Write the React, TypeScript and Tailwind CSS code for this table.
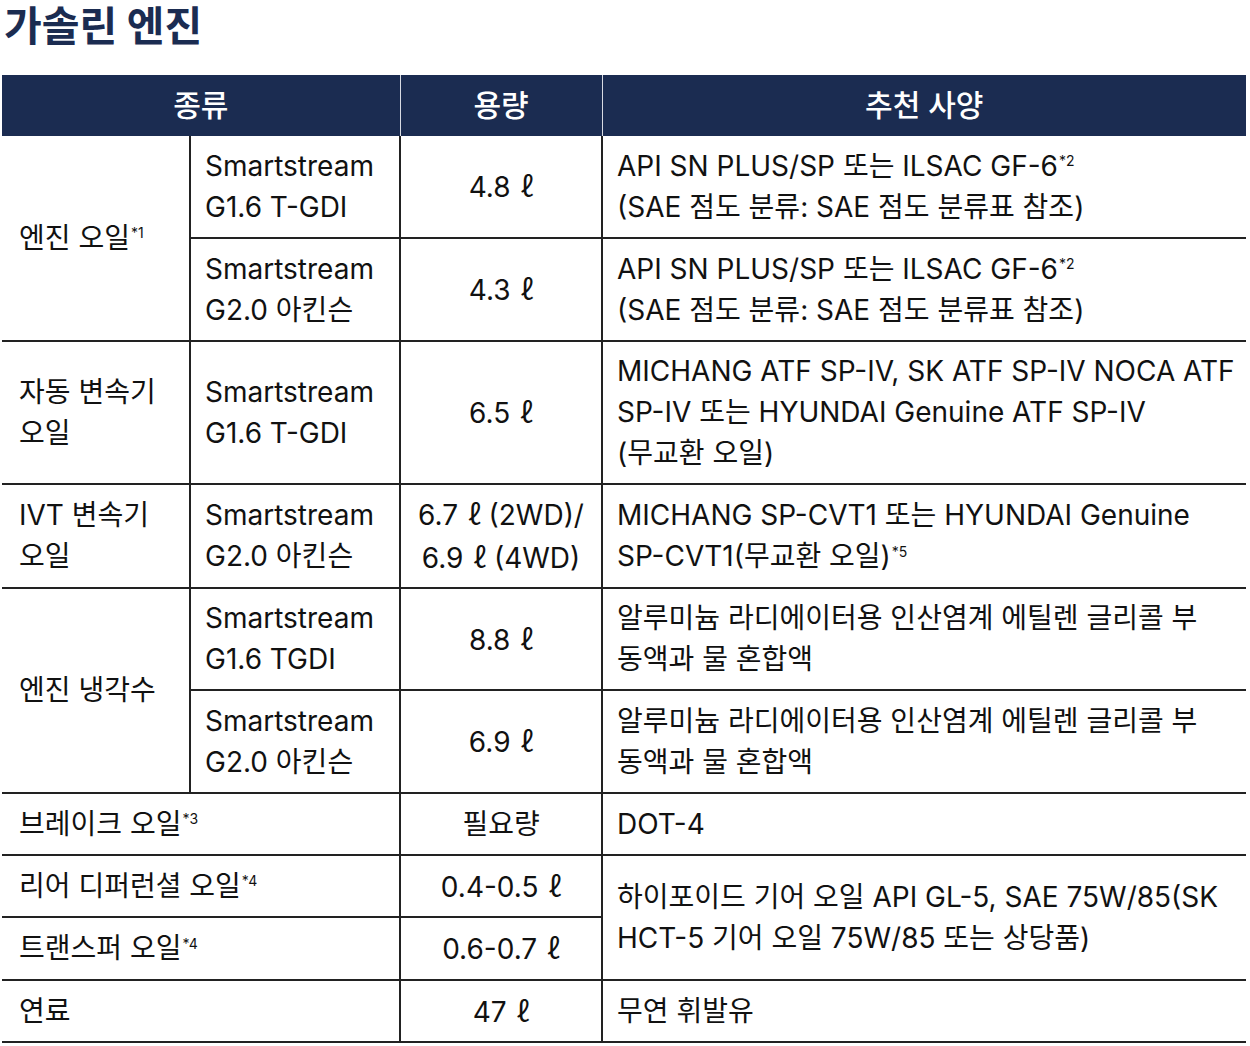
import React from "react";

const Sup = ({ children }: { children: React.ReactNode }) => (
  <sup className="text-[14px] align-super relative top-[1px] ml-[1px]">{children}</sup>
);

const L = () => <span className="font-['Noto_Sans_CJK_KR',sans-serif] ml-[2px]">ℓ</span>;

const tdBase = "border-b-2 border-[#222] text-[#111] align-middle";
const c1 = `${tdBase} border-r-2 pl-[17px] pr-1 text-left whitespace-nowrap`;
const c2 = `${tdBase} border-r-2 pl-[14px] pr-1 text-left whitespace-nowrap`;
const c3 = `${tdBase} border-r-2 text-center whitespace-nowrap px-0`;
const c4 = `${tdBase} pl-[14px] pr-0 text-left whitespace-nowrap`;

export default function App() {
  return (
    <div className="bg-white w-[1250px] h-[1046px] font-[Inter,'Noto_Sans_CJK_KR',sans-serif] text-[28px] leading-[41px]">
      <h1 className="pl-[4px] pt-[2px] h-[75px] text-[41px] leading-[48px] font-bold text-[#1b2c51]">
        가솔린 엔진
      </h1>
      <table className="ml-[2px] w-[1244px] table-fixed border-collapse">
        <colgroup>
          <col className="w-[188px]" />
          <col className="w-[210px]" />
          <col className="w-[202px]" />
          <col className="w-[644px]" />
        </colgroup>
        <thead>
          <tr className="h-[61px] bg-[#1b2c51] text-white">
            <th colSpan={2} className="font-medium text-[30px] border-r border-[#d8dbe2]">종류</th>
            <th className="font-medium text-[30px] border-r border-[#d8dbe2]">용량</th>
            <th className="font-medium text-[30px]">추천 사양</th>
          </tr>
        </thead>
        <tbody>
          <tr className="h-[102px]">
            <td rowSpan={2} className={c1}>
              엔진 오일<Sup>*1</Sup>
            </td>
            <td className={c2}>
              Smartstream
              <br />
              G1.6 T-GDI
            </td>
            <td className={c3}>
              4.8 <L />
            </td>
            <td className={c4}>
              API SN PLUS/SP 또는 ILSAC GF-6<Sup>*2</Sup>
              <br />
              (SAE 점도 분류: SAE 점도 분류표 참조)
            </td>
          </tr>
          <tr className="h-[103px]">
            <td className={c2}>
              Smartstream
              <br />
              G2.0 아킨슨
            </td>
            <td className={c3}>
              4.3 <L />
            </td>
            <td className={c4}>
              API SN PLUS/SP 또는 ILSAC GF-6<Sup>*2</Sup>
              <br />
              (SAE 점도 분류: SAE 점도 분류표 참조)
            </td>
          </tr>
          <tr className="h-[143px]">
            <td className={c1}>
              자동 변속기
              <br />
              오일
            </td>
            <td className={c2}>
              Smartstream
              <br />
              G1.6 T-GDI
            </td>
            <td className={c3}>
              6.5 <L />
            </td>
            <td className={c4}>
              MICHANG ATF SP-Ⅳ, SK ATF SP-Ⅳ NOCA ATF
              <br />
              SP-Ⅳ 또는 HYUNDAI Genuine ATF SP-Ⅳ
              <br />
              (무교환 오일)
            </td>
          </tr>
          <tr className="h-[104px]">
            <td className={c1}>
              IVT 변속기
              <br />
              오일
            </td>
            <td className={c2}>
              Smartstream
              <br />
              G2.0 아킨슨
            </td>
            <td className={c3}>
              6.7 <L /> (2WD)/
              <br />
              6.9 <L /> (4WD)
            </td>
            <td className={c4}>
              MICHANG SP-CVT1 또는 HYUNDAI Genuine
              <br />
              SP-CVT1(무교환 오일)<Sup>*5</Sup>
            </td>
          </tr>
          <tr className="h-[102px]">
            <td rowSpan={2} className={c1}>
              엔진 냉각수
            </td>
            <td className={c2}>
              Smartstream
              <br />
              G1.6 TGDI
            </td>
            <td className={c3}>
              8.8 <L />
            </td>
            <td className={c4}>
              알루미늄 라디에이터용 인산염계 에틸렌 글리콜 부
              <br />
              동액과 물 혼합액
            </td>
          </tr>
          <tr className="h-[103px]">
            <td className={c2}>
              Smartstream
              <br />
              G2.0 아킨슨
            </td>
            <td className={c3}>
              6.9 <L />
            </td>
            <td className={c4}>
              알루미늄 라디에이터용 인산염계 에틸렌 글리콜 부
              <br />
              동액과 물 혼합액
            </td>
          </tr>
          <tr className="h-[62px]">
            <td colSpan={2} className={c1}>
              브레이크 오일<Sup>*3</Sup>
            </td>
            <td className={c3}>필요량</td>
            <td className={c4}>DOT-4</td>
          </tr>
          <tr className="h-[62px]">
            <td colSpan={2} className={c1}>
              리어 디퍼런셜 오일<Sup>*4</Sup>
            </td>
            <td className={c3}>
              0.4-0.5 <L />
            </td>
            <td rowSpan={2} className={c4}>
              하이포이드 기어 오일 API GL-5, SAE 75W/85(SK
              <br />
              HCT-5 기어 오일 75W/85 또는 상당품)
            </td>
          </tr>
          <tr className="h-[63px]">
            <td colSpan={2} className={c1}>
              트랜스퍼 오일<Sup>*4</Sup>
            </td>
            <td className={c3}>
              0.6-0.7 <L />
            </td>
          </tr>
          <tr className="h-[62px]">
            <td colSpan={2} className={c1}>
              연료
            </td>
            <td className={c3}>
              47 <L />
            </td>
            <td className={c4}>무연 휘발유</td>
          </tr>
        </tbody>
      </table>
    </div>
  );
}
